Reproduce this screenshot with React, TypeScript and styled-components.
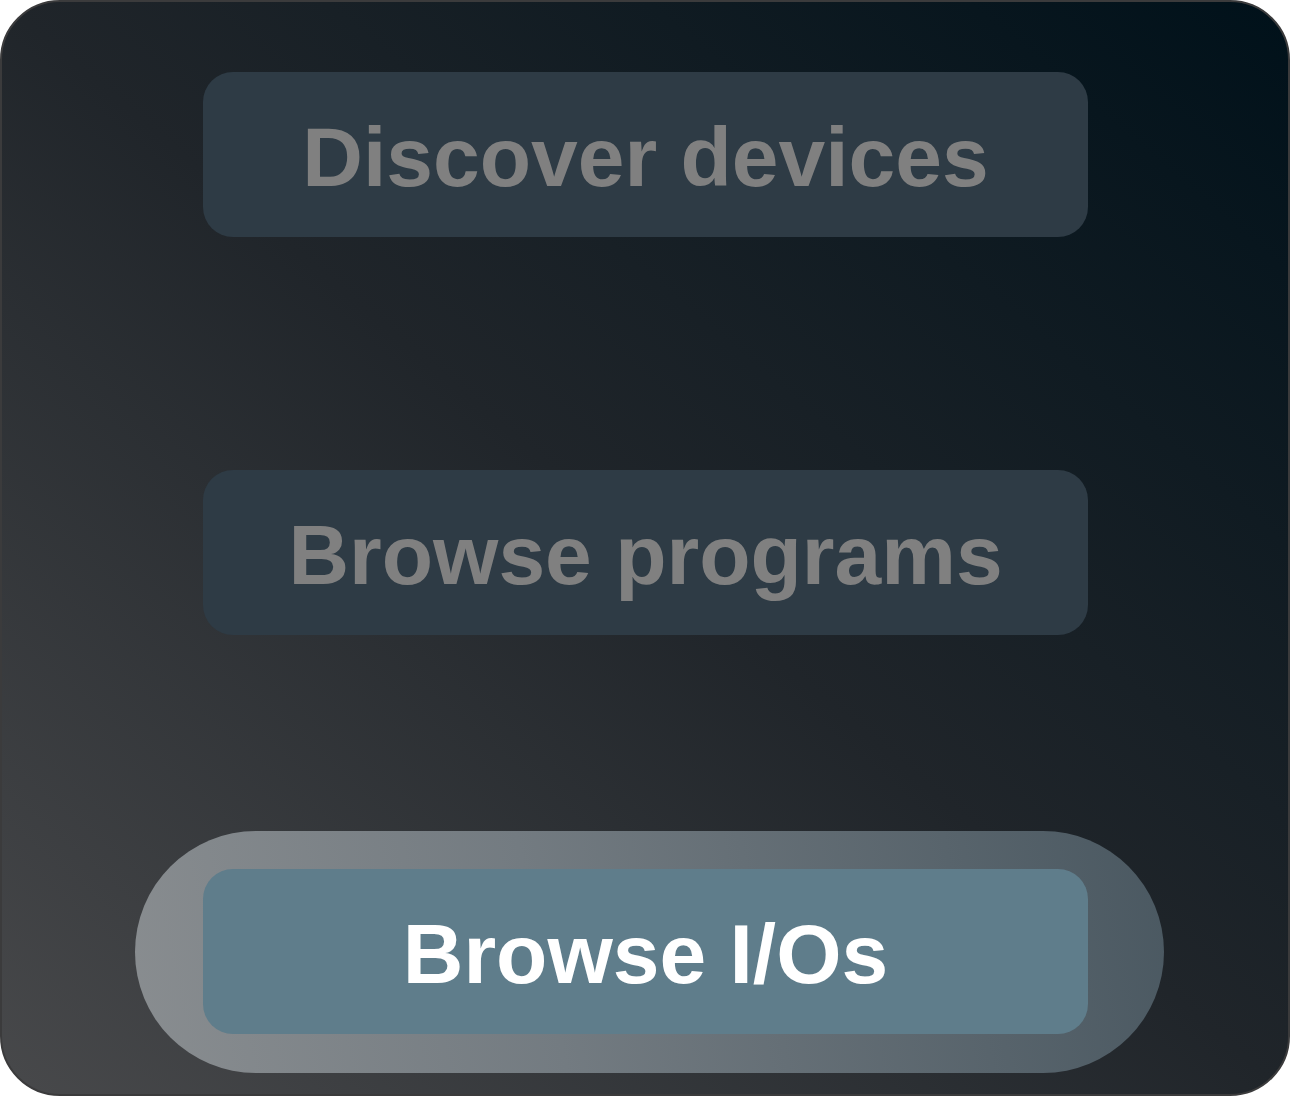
import React from "react";
import styled, { createGlobalStyle } from "styled-components";

const Global = createGlobalStyle`
  html, body {
    margin: 0;
    padding: 0;
    background: #ffffff;
  }
  * { box-sizing: border-box; }
`;

const Card = styled.div`
  width: 1290px;
  height: 1096px;
  border-radius: 60px;
  border: 2px solid #3b3b3c;
  background: linear-gradient(to top right, #48494b 0%, #20252a 50%, #00111a 100%);
  display: flex;
  flex-direction: column;
  align-items: flex-start;
  padding: 70px 0 0 201px;
  overflow: hidden;
`;

const Button = styled.button<{ $active?: boolean; $gapAbove?: number }>`
  width: 885px;
  height: 165px;
  margin-top: ${(p) => p.$gapAbove ?? 0}px;
  border: none;
  border-radius: 30px;
  background: ${(p) => (p.$active ? "#5f7d8b" : "#2e3b45")};
  color: ${(p) => (p.$active ? "#ffffff" : "#808080")};
  font-family: "Liberation Sans", Arial, Helvetica, sans-serif;
  font-weight: 700;
  font-size: 84px;
  line-height: 1;
  display: flex;
  align-items: center;
  justify-content: center;
  padding: 5px 0 0 0;
  cursor: pointer;
`;

const Halo = styled.div`
  margin-top: 196px;
  margin-left: -68px;
  padding: 38px 76px 39px 68px;
  border-radius: 122px;
  background: linear-gradient(78deg, #898d90 0%, #737b81 40%, #4a5861 100%);
`;

export default function App() {
  return (
    <>
      <Global />
      <Card>
        <Button>Discover devices</Button>
        <Button $gapAbove={233}>Browse programs</Button>
        <Halo>
          <Button $active>Browse I/Os</Button>
        </Halo>
      </Card>
    </>
  );
}
